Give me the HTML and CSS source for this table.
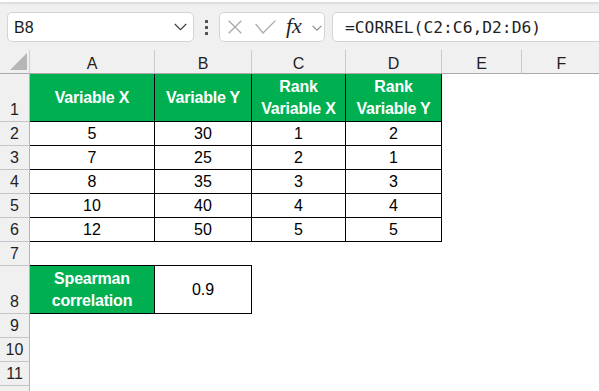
FILE: index.html
```html
<!DOCTYPE html>
<html>
<head>
<meta charset="utf-8">
<link rel="stylesheet" href="styles.css">
</head>
<body>
<div class="top"></div>
<div class="fbar">
  <div class="namebox">
    <span class="nb-text">B8</span>
    <svg class="nb-chev" width="13" height="8" viewBox="0 0 13 8"><polyline points="0.8,1 6.5,6.7 12.2,1"/></svg>
  </div>
  <div class="dots"><i></i><i></i><i></i></div>
  <div class="fxbox">
    <svg class="ic-x" width="14" height="14" viewBox="0 0 14 14"><path d="M0.7 0.7L13.3 13.3M13.3 0.7L0.7 13.3"/></svg>
    <svg class="ic-check" width="21" height="14" viewBox="0 0 21 14"><polyline points="0.6,3.8 8,13 20.4,0.6"/></svg>
    <span class="fx">fx</span>
    <svg class="ic-chev" width="10" height="6" viewBox="0 0 10 6"><polyline points="0.6,0.8 5,5.2 9.4,0.8"/></svg>
  </div>
  <div class="formula">=CORREL(C2:C6,D2:D6)</div>
</div>
<div class="sheet">
  <div class="corner"><svg width="17" height="17" viewBox="0 0 17 17"><polygon points="17,0 17,17 0,17"/></svg></div>
  <div class="ch">A</div><div class="ch">B</div><div class="ch">C</div><div class="ch">D</div><div class="ch">E</div><div class="ch">F</div>

  <div class="rh">1</div>
  <div class="t g">Variable X</div><div class="t g">Variable Y</div><div class="t g">Rank<br>Variable X</div><div class="t g">Rank<br>Variable Y</div><div class="e"></div><div class="e"></div>

  <div class="rh">2</div>
  <div class="t c">5</div><div class="t c">30</div><div class="t c">1</div><div class="t c">2</div><div class="e"></div><div class="e"></div>

  <div class="rh">3</div>
  <div class="t c">7</div><div class="t c">25</div><div class="t c">2</div><div class="t c">1</div><div class="e"></div><div class="e"></div>

  <div class="rh">4</div>
  <div class="t c">8</div><div class="t c">35</div><div class="t c">3</div><div class="t c">3</div><div class="e"></div><div class="e"></div>

  <div class="rh">5</div>
  <div class="t c">10</div><div class="t c">40</div><div class="t c">4</div><div class="t c">4</div><div class="e"></div><div class="e"></div>

  <div class="rh">6</div>
  <div class="t c">12</div><div class="t c">50</div><div class="t c">5</div><div class="t c">5</div><div class="e"></div><div class="e"></div>

  <div class="rh">7</div>
  <div class="e bb"></div><div class="e bb"></div><div class="e"></div><div class="e"></div><div class="e"></div><div class="e"></div>

  <div class="rh">8</div>
  <div class="t g">Spearman<br>correlation</div><div class="t v">0.9</div><div class="e"></div><div class="e"></div><div class="e"></div><div class="e"></div>

  <div class="rh">9</div>
  <div class="e"></div><div class="e"></div><div class="e"></div><div class="e"></div><div class="e"></div><div class="e"></div>

  <div class="rh">10</div>
  <div class="e"></div><div class="e"></div><div class="e"></div><div class="e"></div><div class="e"></div><div class="e"></div>

  <div class="rh">11</div>
  <div class="e"></div><div class="e"></div><div class="e"></div><div class="e"></div><div class="e"></div><div class="e"></div>

  <div class="rh"></div>
  <div class="e"></div><div class="e"></div><div class="e"></div><div class="e"></div><div class="e"></div><div class="e"></div>
</div>
</body>
</html>
```
FILE: styles.css
```css
html, body {
  margin: 0;
  padding: 0;
}
body {
  width: 599px;
  height: 391px;
  overflow: hidden;
  background: #f0f0f0;
  font-family: "Liberation Sans", Arial, sans-serif;
  color: #000;
}
.top {
  height: 2px;
  background: #fff;
  box-shadow: 0 1px 3px rgba(0, 0, 0, 0.18);
  position: relative;
}
.fbar {
  display: flex;
  align-items: center;
  margin-top: 10px;
  height: 30px;
  padding-left: 7px;
}
.namebox {
  width: 187px;
  height: 30px;
  box-sizing: border-box;
  border: 1px solid #d4d4d4;
  border-radius: 5px;
  background: #fff;
  display: flex;
  align-items: center;
  justify-content: space-between;
  padding: 0 6px;
  flex: none;
}
.nb-text {
  font-size: 16px;
  color: #1a1a1a;
  padding-top: 1px;
}
.nb-chev polyline {
  fill: none;
  stroke: #444;
  stroke-width: 1.3;
}
.dots {
  width: 25px;
  flex: none;
  display: flex;
  flex-direction: column;
  align-items: center;
  gap: 3px;
}
.dots i {
  display: block;
  width: 3px;
  height: 3px;
  background: #505050;
  border-radius: 0.5px;
}
.fxbox {
  width: 106px;
  height: 30px;
  flex: none;
  box-sizing: border-box;
  border: 1px solid #d4d4d4;
  border-radius: 5px;
  background: #fff;
  display: flex;
  align-items: center;
  padding-left: 8px;
}
.ic-x path, .ic-check polyline {
  fill: none;
  stroke: #a9a9a9;
  stroke-width: 1.3;
}
.ic-check {
  margin-left: 13px;
}
.fx {
  margin-left: 10px;
  font-family: "Liberation Serif", "Times New Roman", serif;
  font-style: italic;
  font-size: 22px;
  color: #222;
  line-height: 1;
  padding-bottom: 2px;
}
.ic-chev {
  margin-left: 10px;
  margin-top: 1px;
}
.ic-chev polyline {
  fill: none;
  stroke: #8a8a8a;
  stroke-width: 1.1;
}
.formula {
  flex: 1;
  height: 30px;
  box-sizing: border-box;
  margin-left: 7px;
  margin-right: -20px;
  border: 1px solid #d4d4d4;
  border-radius: 5px;
  background: #fff;
  display: flex;
  align-items: center;
  padding-left: 12px;
  font-family: "DejaVu Sans Mono", "Liberation Mono", monospace;
  font-size: 16.3px;
  color: #222;
}
.sheet {
  margin-top: 8px;
  display: grid;
  grid-template-columns: 30px 125px 97px 94px 96px 80px 80px;
  grid-template-rows: 24px 48px 24px 24px 24px 24px 24px 24px 48px 24px 24px 24px 24px;
  background: #fff;
}
.sheet > div {
  box-sizing: border-box;
  display: flex;
  justify-content: center;
}
.corner {
  background: #f0f0f0;
  border-right: 1px solid #d0d0d0;
  border-bottom: 1px solid #a9a9a9;
  align-items: flex-end;
  justify-content: flex-end !important;
  padding: 0 2px 3px 0;
}
.corner polygon {
  fill: #b6b6b6;
}
.ch {
  background: #f0f0f0;
  border-right: 1px solid #cacaca;
  border-bottom: 1px solid #a9a9a9;
  font-size: 16px;
  line-height: 21px;
  padding-top: 3px;
  color: #1f1f1f;
}
.rh {
  background: #f0f0f0;
  border-right: 1px solid #b4b4b4;
  border-bottom: 1px solid #c4c4c4;
  font-size: 16px;
  line-height: 22px;
  align-items: flex-end;
  color: #1f1f1f;
}
.e {
  background: #fff;
}
.bb {
  border-bottom: 1px solid #000;
}
.t {
  border-right: 1px solid #000;
  border-bottom: 1px solid #000;
  background: #fff;
  text-align: center;
}
.c {
  font-size: 16px;
  line-height: 22px;
  align-items: flex-end;
}
.v {
  font-size: 16px;
  line-height: 22px;
  align-items: center;
}
.g {
  background: #00b050;
  color: #fff;
  font-weight: bold;
  font-size: 16px;
  line-height: 21.5px;
  letter-spacing: -0.2px;
  align-items: center;
}
```
